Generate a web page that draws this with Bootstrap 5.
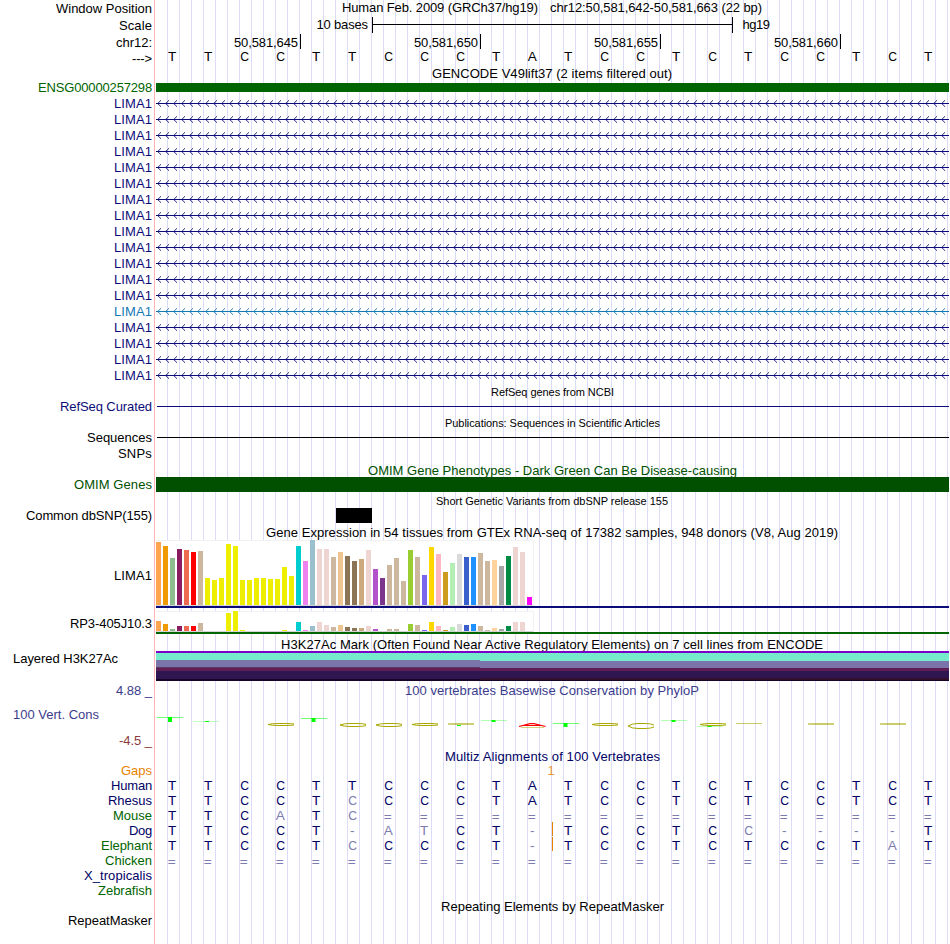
<!DOCTYPE html>
<html lang="en">
<head>
<meta charset="utf-8">
<meta name="viewport" content="width=device-width, initial-scale=1">
<title>Genome Browser chr12:50,581,642-50,581,663</title>
<link href="https://cdn.jsdelivr.net/npm/bootstrap@5.3.0/dist/css/bootstrap.min.css" rel="stylesheet">
<style>
body{font-family:"Liberation Sans",Arial,sans-serif;font-size:13px;color:#000;overflow:hidden}
#browser{width:949px;height:944px;
 background:linear-gradient(#ffb3b3,#ffb3b3) 154px 0/1px 100% no-repeat,
 repeating-linear-gradient(90deg,transparent 0 11px,#dcdcf8 11px 12px) 156px 0/793px 100% no-repeat}
.side{width:156px;padding-right:4px;white-space:pre}
.side.start{padding-left:13px}
.plot{width:793px;overflow:visible}
.plot text{white-space:pre}
.base{font-size:13.6px}
</style>
<script src="https://cdn.jsdelivr.net/npm/bootstrap@5.3.0/dist/js/bootstrap.bundle.min.js"></script>
</head>
<body class="bg-white m-0">
<main id="browser" class="d-flex flex-column"></main>
<script>
const NAVY='#0c0c78', GREEN='#006400', OMIM='#005000', ALN='#000064', DIM='#7c7cb0', VERT='#3c3c8c', ORANGE='#e68200';
const X0=156, browser=document.getElementById('browser');
let y=0;

// All plot coordinates are browser coordinates; each row's viewBox starts at its own top.
function row(h, label, plot=''){
  const r=document.createElement('div');
  r.className='d-flex flex-shrink-0';
  r.style.height=h+'px';
  let side='<div class="side flex-shrink-0"></div>';
  if(label){
    const [t,mid,from,color='#000',start]=label;
    side=`<div class="side flex-shrink-0 ${start?'start text-start':'text-end'}" style="line-height:${2*(mid-y)}px;color:${color}"><span data-w="${(start||152)-from}">${t}</span></div>`;
  }
  r.innerHTML=side+`<svg class="plot d-block flex-shrink-0" width="793" height="${h}" viewBox="${X0} ${y} 793 ${h}">${plot}</svg>`;
  browser.append(r);
  y+=h;
}
const rect=(x,top,w,h,c)=>`<rect x="${x}" y="${top}" width="${w}" height="${h}" fill="${c}"/>`;
const text=(t,x1,x2,base,c='#000',size=13)=>`<text x="${x1}" y="${base}" textLength="${x2-x1}" font-size="${size}" fill="${c}">${t}</text>`;
const full=(top,h,c,x=X0)=>rect(x,top,949-x,h,c);
const seq=(s,base,c)=>[...s].map((b,i)=>{
  const dim=/[a-z=\-]/.test(b), ch=b.toUpperCase();
  const dx=ch==='C'?.6:ch==='='?-.3:.2, dy=ch==='='?1:0;
  const fit=ch==='C'?' textLength="8.8" lengthAdjust="spacingAndGlyphs"':'';
  return `<text class="base" x="${172+36*i+dx}" y="${base+dy}" text-anchor="middle"${fit} fill="${dim?DIM:c}">${ch}</text>`;
}).join('');

// Ruler
row(17,['Window Position',8.5,56],text('Human Feb. 2009 (GRCh37/hg19)',342,538,12)+text('chr12:50,581,642-50,581,663 (22 bp)',550,762,12));
row(17,['Scale',25.5,119],text('10 bases',316.5,368,29)+rect(372,24,361,1,'#000')+rect(372,17,1,16,'#000')+rect(732,17,1,16,'#000')+text('hg19',742.5,770,29));
row(16,['chr12:',42.5,116],[645,650,655,660].map((n,i)=>text('50,581,'+n,234+180*i,298+180*i,47)+rect(300+180*i,34,1,15,'#000')).join(''));
const HUMAN='TTCCTTCCCTATCCTCTCCTCT';
row(16,['---&gt;',58.5,132],seq(HUMAN,61,'#000'));

// GENCODE
row(15,null,text('GENCODE V49lift37 (2 items filtered out)',432,672,78));
row(14,['ENSG00000257298',87.5,38,GREEN],full(83,9,GREEN));
for(let i=0;i<18;i++){
  const c=i===13?'#1478b4':NAVY, m=103+16*i;
  let d='';
  for(let x=157;x<949;x+=8) d+=`M${Math.min(x+4,949)} ${m-2.7}L${x+.7} ${m+.5}L${Math.min(x+4,949)} ${m+3.7}`;
  row(16,['LIMA1',m+.5,114,c],full(m,1,c)+`<path d="${d}" fill="none" stroke="${c}" stroke-width=".9"/>`);
}
row(17,null,text('RefSeq genes from NCBI',491,614,396,'#000',11));
row(13,['RefSeq Curated',406.5,60,NAVY],full(406,1,NAVY,157));
row(17,null,text('Publications: Sequences in Scientific Articles',445,660,427,'#000',11));
row(15,['Sequences',437.5,87],full(437,1,'#000',157));
row(17,['SNPs',453.5,118]);

// OMIM and dbSNP
row(15,null,text('OMIM Gene Phenotypes - Dark Green Can Be Disease-causing',368,737,475,OMIM));
row(15,['OMIM Genes',484.5,74,OMIM],full(477,15,OMIM));
row(16,null,text('Short Genetic Variants from dbSNP release 155',436,668,505,'#000',11));
row(15,['Common dbSNP(155)',515.5,26],rect(336,508,36,15,'#000'));

// GTEx expression
const tan='#cdb79e', pale='#eed5d2', yel='#eeee00', brn='#8b7355';
const tissue=['#ffa54f','#ee9a00','#8fbc8f','#8b1c62','#ee6a50','#ff0000',tan,...Array(13).fill(yel),'#00cdcd','#ee82ee','#9ac0cd',pale,pale,tan,'#eec591',brn,brn,'#cdaa7d',pale,'#b452cd','#7a378b',tan,tan,tan,'#9acd32',tan,'#7a67ee','#ffd700','#ffb6c1','#cd9b1d','#b4eeb4','#d9d9d9','#3a5fcd','#1e90ff',tan,tan,'#ffd39b','#a6a6a6','#008b45',pale,pale,'#ff00ff'];
const lima=[63,59,47,56,55,53,54,27,25,27,61,59,25,25,27,27,26,26,38,29,59,44,65,56,56,48,53,49,44,46,55,36,27,40,47,24,55,48,30,58,51,33,42,51,48,48,52,44,45,39,49,58,53,8];
const rp3=[10,7,2,5,5,5,8,0,0,0,18,20,1,0,0,0,0,0,1,0,9,1,5,9,6,4,6,4,3,3,5,2,0,2,2,0,7,6,1,9,5,1,4,7,6,7,5,1,3,2,5,9,9,0];
const bars=(vals,top,base)=>rect(156,top,378,base-top+1,'#f2f2f2')+rect(156,top+1,377,base-top-1,'#fff')+rect(156,base,377,1,'#d4d4d4')+vals.map((v,i)=>v?rect(156+7*i,base-v,5,v,tissue[i]):'').join('');
row(17,null,text('Gene Expression in 54 tissues from GTEx RNA-seq of 17382 samples, 948 donors (V8, Aug 2019)',266,838,537));
row(69,['LIMA1',575.5,114],bars(lima,540,605)+full(606,2,NAVY));
row(26,['RP3-405J10.3',623.5,70],bars(rp3,611,631)+full(632,2,GREEN));

// Layered H3K27Ac
row(16,null,text('H3K27Ac Mark (Often Found Near Active Regulatory Elements) on 7 cell lines from ENCODE',281,823,649));
row(31,['Layered H3K27Ac',658.5,13,'#000',118],
  full(651,2,'#7800c8')+full(653,8,'#76ebcb')+rect(156,660,324,8,'#7a74ab')+rect(480,661,469,7,'#7a74ab')+
  rect(156,667,324,1,'#5a3a60')+full(668,3,'#5f1d53')+full(671,8,'#301650')+full(679,2,'#180428')+rect(480,678,469,2,'#32102c'));

// PhyloP sequence logo
const tee=(i,top,h,a=.55)=>`<rect x="${157+36*i}" y="${top}" width="26" height="1" fill="#00ff00" opacity="${a}"/>`+(h?rect(168+36*i-(i>3?.5:0),top,4,h,'#00ff00'):'');
const cee=(i,top,h)=>{const x=159+36*i,b=top+h;
  return `<path d="M${x+27} ${top+h*.35}Q${x+24} ${top+.5} ${x+18} ${top+.5}H${x+11}Q${x+5} ${top+.5} ${x+1} ${top+h/2}Q${x+5} ${b-.5} ${x+11} ${b-.5}H${x+18}Q${x+24} ${b-.5} ${x+27} ${b-h*.35}" fill="none" stroke="#a8a800" stroke-width="${h<3?.6:1}"/>`};
row(15,['4.88 _',690.5,116,VERT],text('100 vertebrates Basewise Conservation by PhyloP',405,699,695,VERT));
row(36,['100 Vert. Cons',714.5,13,VERT,99],
  tee(0,717,5)+tee(1,721,0,.25)+rect(205,721,4,1,'#00ff00')+cee(3,723,3)+tee(4,718,4)+cee(5,723,4)+cee(6,723,4)+cee(7,723,3)+cee(8,723,2)+rect(457,725,4,1,'#00ff00')+
  tee(9,720,2,.3)+'<path d="M519 726.5L530 723.7H534L545.5 726.5M525 725.5H540" fill="none" stroke="#f00" stroke-width="1.2"/><path d="M521 727.5H544" stroke="#a8a800" stroke-width=".5"/>'+
  tee(11,723,4)+cee(12,723,3)+cee(13,723,6)+tee(14,720,2,.3)+cee(15,723,3)+tee(15,726,1,.25)+
  '<path d="M736 723.5H762" stroke="#a8a800" stroke-width=".6"/>'+cee(18,723,2)+cee(20,723,2));
row(17,['-4.5 _',740.5,119,'#8c3c3c']);

// Multiz alignment
row(14,null,text('Multiz Alignments of 100 Vertebrates',445,660,761,ALN));
row(15,['Gaps',770.5,121,ORANGE],`<text x="547.5" y="775" fill="${ORANGE}" opacity=".8">1</text>`);
[['Human',HUMAN,111,ALN],
 ['Rhesus','TTCCTcCCCTATCCTCTCCTCT',108,ALN],
 ['Mouse','TTCaTc================',113,GREEN],
 ['Dog','TTCCT-atCT-TCCTCc----T',129,ALN],
 ['Elephant','TTCCTcCCCT-TCCTCTCCTaT',101,GREEN],
 ['Chicken','======================',105,GREEN],
 ['X_tropicalis','',84,ALN],
 ['Zebrafish','',98,GREEN]].forEach(([n,s,w,c],i)=>{
  const top=778+15*i;
  row(15,[n,top+7.5,w,c],seq(s,top+12,ALN)+(i===3||i===4?rect(552,top-1,1,14,ORANGE):''));
});
row(15,null,text('Repeating Elements by RepeatMasker',441,664,911));
row(31,['RepeatMasker',920.5,68]);

document.querySelectorAll('[data-w]').forEach(s=>{
  s.style.letterSpacing=(s.dataset.w-s.getBoundingClientRect().width)/s.textContent.length+'px';
});
</script>
</body>
</html>
